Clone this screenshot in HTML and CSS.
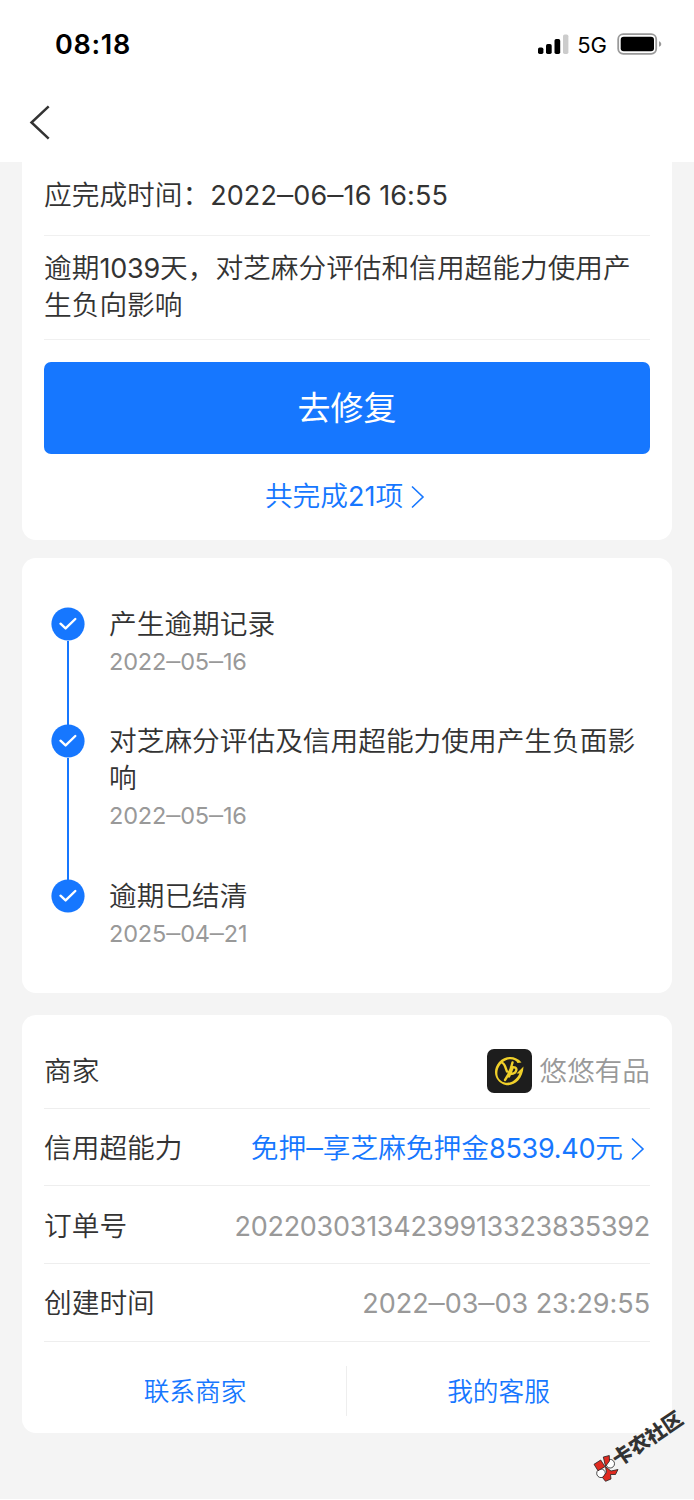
FILE: index.html
```html
<!DOCTYPE html>
<html lang="zh-CN">
<head>
<meta charset="utf-8">
<title>履约详情</title>
<link rel="stylesheet" href="styles.css">
</head>
<body>
<header class="top">
  <div class="status">
    <span class="clock">08:18</span>
    <div class="indicators">
      <svg class="signal" width="32" height="22" viewBox="0 0 32 22">
        <rect x="1" y="14.500" width="5.400" height="6.500" rx="1.700"/>
        <rect x="9" y="11" width="5.700" height="10" rx="1.700"/>
        <rect x="17.500" y="6" width="5.700" height="15" rx="1.700"/>
        <rect class="off" x="26" y="1.500" width="5.400" height="19.500" rx="1.700"/>
      </svg>
      <span class="network">5G</span>
      <svg class="battery" width="46" height="24" viewBox="0 0 46 24">
        <rect class="shell" x="1.200" y="2.200" width="38" height="19.600" rx="5"/>
        <rect x="3.700" y="4.800" width="33.300" height="14.400" rx="3"/>
        <path class="cap" d="M42 9.200c3 1 3 4.600 0 5.600z"/>
      </svg>
    </div>
  </div>
  <nav class="nav">
    <svg class="back" width="24" height="36" viewBox="0 0 24 36"><path d="M21.700 2.300 L4.500 18.500 L21.700 34.700"/></svg>
  </nav>
</header>

<main class="page">
  <section class="card summary">
    <p class="row due">应完成时间：<span class="num due-num">2022<i class="dash">–</i>06<i class="dash">–</i>16 16:55</span></p>
    <p class="row notice">逾期<span class="num days">1039</span>天，对芝麻分评估和信用超能力使用产生负向影响</p>
    <button class="primary">去修复</button>
    <a class="more">共完成<span class="num count">21</span>项<svg class="chevron" width="14" height="24" viewBox="0 0 14 24"><path d="M1 1.500 L12 12 L1 22.500"/></svg></a>
  </section>

  <section class="card timeline">
    <div class="step">
      <div class="track"><svg class="tick" width="34" height="34" viewBox="0 0 34 34"><circle cx="17" cy="17" r="16.600"/><path d="M9.500 16.700 L14.600 21.400 L24.300 12"/></svg></div>
      <div class="detail"><p class="title">产生逾期记录</p><p class="date">2022<i class="dash">–</i>05<i class="dash">–</i>16</p></div>
    </div>
    <div class="step">
      <div class="track"><svg class="tick" width="34" height="34" viewBox="0 0 34 34"><circle cx="17" cy="17" r="16.600"/><path d="M9.500 16.700 L14.600 21.400 L24.300 12"/></svg></div>
      <div class="detail"><p class="title">对芝麻分评估及信用超能力使用产生负面影响</p><p class="date">2022<i class="dash">–</i>05<i class="dash">–</i>16</p></div>
    </div>
    <div class="step">
      <div class="track"><svg class="tick" width="34" height="34" viewBox="0 0 34 34"><circle cx="17" cy="17" r="16.600"/><path d="M9.500 16.700 L14.600 21.400 L24.300 12"/></svg></div>
      <div class="detail"><p class="title">逾期已结清</p><p class="date">2025<i class="dash">–</i>04<i class="dash">–</i>21</p></div>
    </div>
  </section>

  <section class="card info">
    <div class="field merchant"><span>商家</span>
      <span class="value"><svg class="logo" width="45" height="44" viewBox="0 0 45 44">
        <rect class="tile" width="45" height="44" rx="7"/>
        <path class="gold" d="M34.500 13.500C29 6.500 18.500 6 12 13C4.500 21.500 8 33.500 18.500 36C27 37.500 36 30.500 36.500 17.500L29.500 24.500L32.500 24.500C29 32 22.500 35 17 33.200C9 30.500 8.500 21.500 14 14.800C20 8.500 28 9.500 30.500 14z"/>
        <path class="mono" d="M15.500 14C18 15 18.500 19 20 22.500M25.500 13.500C24 20 22 25.500 18 31M25.500 19L22 27.500M24 18.500C32 16.500 30.500 24.500 23.500 25"/>
      </svg>悠悠有品</span></div>
    <div class="field"><span>信用超能力</span><a class="value link"><span>免押<i class="dash">–</i>享芝麻免押金<span class="num amount">8539.40</span>元</span><svg class="chevron" width="14" height="24" viewBox="0 0 14 24"><path d="M1 1.500 L12 12 L1 22.500"/></svg></a></div>
    <div class="field"><span>订单号</span><span class="value num order">20220303134239913323835392</span></div>
    <div class="field"><span>创建时间</span><span class="num created">2022<i class="dash">–</i>03<i class="dash">–</i>03 23:29:55</span></div>
    <div class="actions"><a>联系商家</a><a>我的客服</a></div>
  </section>
</main>

<div class="watermark">
  <svg class="emblem" width="26" height="28" viewBox="0 0 26 28">
    <circle class="petal" cx="17.200" cy="9.700" r="4.300"/><circle class="petal" cx="8" cy="19.300" r="4.300"/>
    <path d="M1 10.300L7.700 6L12 12.700L5 16.700z"/><path d="M10.300 3L16.300 1.500L16.500 7L12.500 12.500z"/>
    <path d="M12.500 12.700L18 17L25 15.500L22.500 20.500L17.500 20.500L18 25L12.500 27.300L9.500 23.500L13.500 18.500z"/>
  </svg>
  <span class="brand">卡农社区</span>
</div>
</body>
</html>
```
FILE: styles.css
```css
* { box-sizing: border-box; }
body {
  margin: 0;
  width: 694px;
  height: 1500px;
  overflow: hidden;
  position: relative;
  background: #f4f4f4;
  border-bottom: 1px solid #fff;
  color: #333;
  font: 350 27.7px/37px Inter, "Noto Sans CJK SC", sans-serif;
}
p { margin: 0; }
svg { flex: none; }

.top { height: 162px; background: #fff; }
.status {
  height: 88px;
  padding: 0 31px 0 55px;
  display: flex;
  align-items: center;
  justify-content: space-between;
  color: #000;
}
.clock { font-size: 27px; font-weight: 600; letter-spacing: 0.7px; }
.indicators { display: flex; align-items: center; }
.network { font-size: 22px; font-weight: 400; margin: 2px 10px 0 8px; }
.off { fill: #ccc; }
.shell { fill: none; stroke: #999; stroke-width: 1.8; }
.cap { fill: #999; }
.nav { height: 74px; padding: 16px 27px; }
.back { display: block; fill: none; stroke: #333; stroke-width: 2.5; }

.page { padding: 0 22px; }
.card { background: #fff; border-radius: 14px; padding: 0 22px; }
.num { font-family: Inter, sans-serif; font-size: 27px; font-weight: 400; }
.dash { font-style: normal; font-size: 1.2em; font-weight: 300; line-height: 0; vertical-align: -0.500px; }

.summary { height: 378px; border-radius: 0 0 14px 14px; margin-bottom: 18px; }
.row { border-bottom: 1px solid #f0f0f0; }
.due { height: 74px; padding-top: 15px; }
.due-num { letter-spacing: 0.1px; }
.notice { height: 104px; padding-top: 14px; }
.days { letter-spacing: -0.2px; }
.primary {
  display: block;
  width: 606px;
  height: 92px;
  margin: 22px 0 23px;
  border: 0;
  border-radius: 7px;
  background: #1677ff;
  color: #fff;
  font: 400 33px/40px "Noto Sans CJK SC", sans-serif;
  padding-bottom: 5px;
}
.more { display: flex; align-items: center; justify-content: center; color: #1677ff; padding: 1px 4px 0 0; }
.chevron { margin-left: 8px; fill: none; stroke: #1677ff; stroke-width: 1.6; }

.timeline { height: 435px; padding: 47px 22px 0 29px; margin-bottom: 22px; }
.step { display: flex; gap: 24px; }
.track { width: 34px; padding-top: 2px; display: flex; flex-direction: column; align-items: center; }
.step:not(:last-child) .track::after { content: ""; flex: 1; width: 2px; margin-bottom: -3px; background: #1677ff; }
.tick circle { fill: #1677ff; }
.tick path { fill: none; stroke: #fff; stroke-width: 2.4; stroke-linecap: round; stroke-linejoin: round; }
.detail { flex: 1; padding: 1px 0 42.300px; }
.date { font-size: 23.500px; font-weight: 400; letter-spacing: -0.150px; color: #999; height: 37px; }

.info { height: 418px; padding-top: 16px; }
.field {
  height: 77.700px;
  padding-top: 3px;
  display: flex;
  align-items: center;
  justify-content: space-between;
  border-bottom: 1px solid #eee;
}
.merchant { padding-top: 4px; }
.value { display: flex; align-items: center; color: #999; }
.order { letter-spacing: -0.280px; }
.amount { letter-spacing: -0.250px; }
.created { color: #999; letter-spacing: -0.050px; }
.logo { margin-right: 7px; }
.tile { fill: #1d1d1d; }
.gold { fill: #f0d02a; }
.mono { fill: none; stroke: #f0d02a; stroke-width: 2.4; stroke-linecap: round; }
.link { color: #1677ff; padding-right: 5px; }
.actions {
  display: grid;
  grid-template-columns: 1fr 1fr;
  padding-top: 24px;
  text-align: center;
  font-size: 25.700px;
  line-height: 52px;
  color: #1677ff;
}
.actions a { height: 50px; }
.actions a:first-child { border-right: 1px solid #eee; }

.watermark { position: absolute; left: 593px; top: 1454px; }
.emblem { display: block; fill: #df2a20; stroke: #222; stroke-width: 0.8; }
.petal { fill: #fff; }
.brand {
  position: absolute;
  left: 14px;
  top: -30px;
  width: 80px;
  transform: rotate(-34deg);
  font: 900 20px/28px "Noto Sans CJK SC", sans-serif;
  white-space: nowrap;
}
```
